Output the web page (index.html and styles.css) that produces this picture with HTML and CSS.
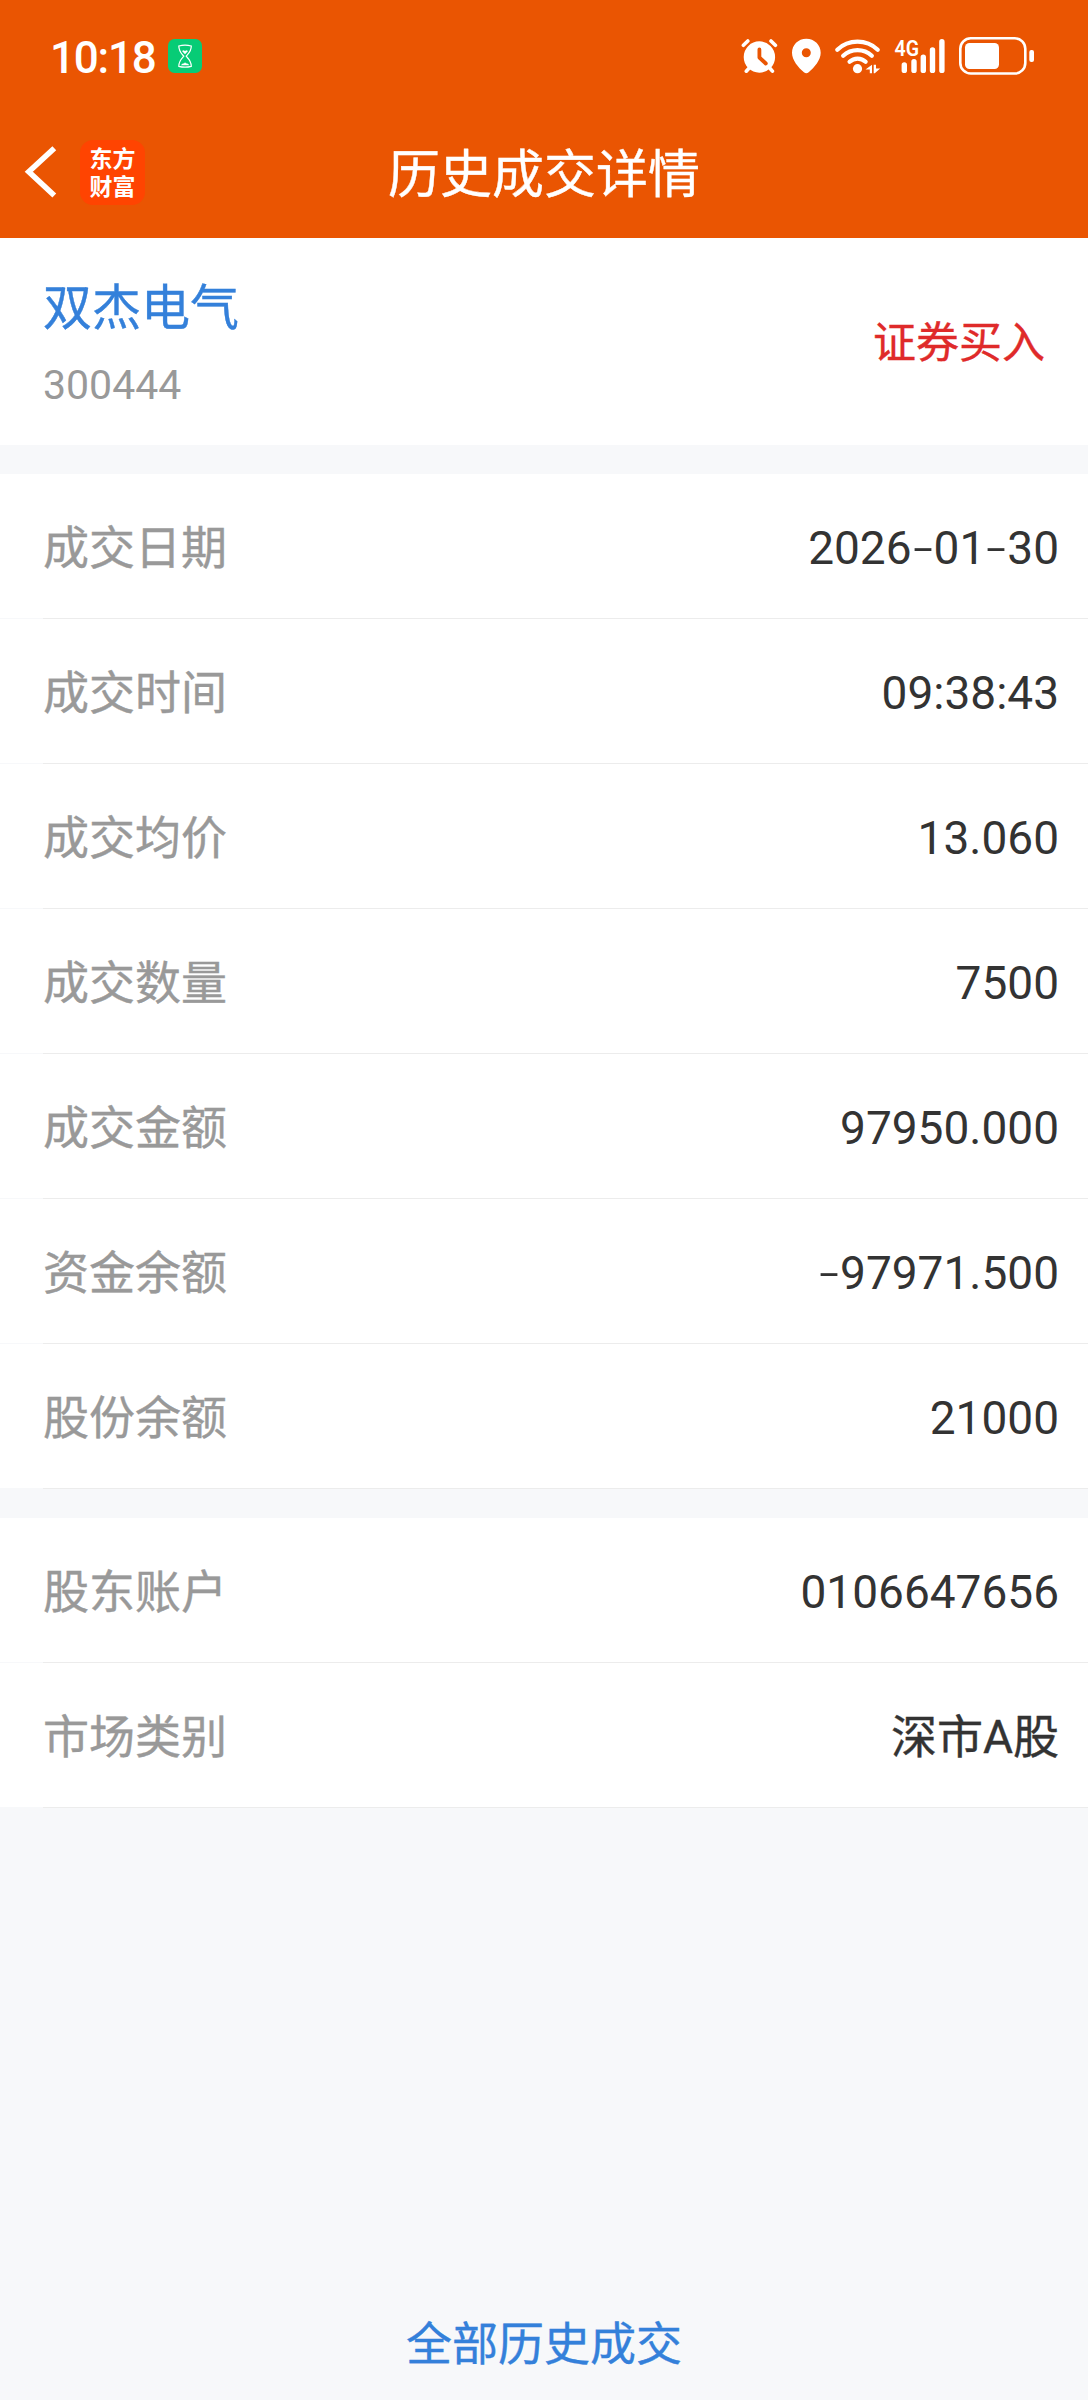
FILE: index.html
```html
<!DOCTYPE html>
<html lang="zh-CN">
<head>
<meta charset="utf-8">
<title>历史成交详情</title>
<link rel="stylesheet" href="styles.css">
</head>
<body>
<header class="header">
  <div class="status">
    <div class="status-left">
      <span class="clock">10:18</span>
      <svg class="timer" width="34" height="34" viewBox="0 0 34 34">
        <rect width="34" height="34" rx="6.5" fill="#07cc76"/>
        <g fill="none" stroke="#fff" stroke-width="1.2">
          <path d="M10.800 7Q17 5.400 23.300 7C23.300 12.500 20.500 14.500 18.200 17.200C20.500 19.800 23.300 22 23.300 27.300Q17 29 10.800 27.300C10.800 22 13.500 19.800 15.800 17.200C13.500 14.500 10.800 12.500 10.800 7Z"/>
        </g>
        <path d="M14 12l1.600-.8 1.400.8 1.500-.8 1.500.8-3 3.200zM12.800 26.200l1.500-1.500 2-.4.700-1 .9 1 2 .4 1.500 1.500z" fill="#fff"/>
      </svg>
    </div>
    <div class="status-right">
      <svg width="38" height="38" viewBox="740 37 38 38">
        <g stroke="#fff" stroke-width="3.600" stroke-linecap="round">
          <path d="M743.400 45.300L747.800 41M775.400 45.300L771 41M746.300 71.200L751 66M772.400 71.200L768 66"/>
        </g>
        <circle cx="759.400" cy="57" r="15.700" fill="#fff"/>
        <path d="M759.400 49.500V57.500L765.800 63.500" fill="none" stroke="#ea5502" stroke-width="3.800" stroke-linecap="round" stroke-linejoin="round"/>
      </svg>
      <svg class="pin" width="30" height="38" viewBox="791 37 30 38">
        <path fill="#fff" fill-rule="evenodd" d="M806.300 38.700C814.500 38.700 820.700 45 820.700 52.700C820.700 60 814.500 67.300 808.700 72.200Q806.300 74.200 803.900 72.200C798.100 67.300 792 60 792 52.700C792 45 798.100 38.700 806.300 38.700ZM806.300 48.200A4.500 4.500 0 1 0 806.300 57.200A4.500 4.500 0 1 0 806.300 48.200Z"/>
      </svg>
      <svg class="wifi" width="47" height="38" viewBox="834 37 47 38">
        <g fill="none" stroke="#fff" stroke-width="4.300" stroke-linecap="round">
          <path d="M837.300 49.700A29.500 29.500 0 0 1 877.700 49.700M843.200 55.700A21 21 0 0 1 871.800 55.700M849.600 61.800A11.500 11.500 0 0 1 865.600 61.800"/>
        </g>
        <circle cx="857.500" cy="68.700" r="4.600" fill="#fff"/>
        <path d="M865.500 69.500L872 64.800V73.300H869.800V69.500ZM873.700 64.800H876V68.500H880.200L874.800 73.300H873.700Z" fill="#fff"/>
      </svg>
      <svg class="signal" width="52" height="46" viewBox="894 33 52 46">
        <text class="network" x="894.500" y="55.600" textLength="24.500" lengthAdjust="spacingAndGlyphs">4G</text>
        <g stroke="#fff" stroke-width="5.400" stroke-linecap="round">
          <path d="M904.300 65V70.400M914 61.700V70.400M923.300 57.200V70.400M932.500 50V70.400M941.900 41.700V70.400"/>
        </g>
      </svg>
      <svg class="battery" width="76" height="38" viewBox="959 37 76 38">
        <rect x="960.300" y="38.300" width="65" height="35.200" rx="10.500" fill="none" stroke="#fff" stroke-width="2.600"/>
        <rect x="965" y="43" width="34" height="26" rx="4.500" fill="#fff"/>
        <rect x="1029.300" y="50" width="4.700" height="12" rx="2" fill="#fff"/>
      </svg>
    </div>
  </div>
  <nav class="nav">
    <div class="nav-left">
      <svg width="34" height="54" viewBox="24 146 34 54">
        <path d="M54.300 149.200L28.800 172.800L54.300 196.500" fill="none" stroke="#fff" stroke-width="5.600"/>
      </svg>
      <div class="logo"><span>东方</span><span>财富</span></div>
    </div>
    <h1 class="title">历史成交详情</h1>
    <div></div>
  </nav>
</header>
<main class="content">
  <section class="stock">
    <div>
      <div class="name">双杰电气</div>
      <div class="code">300444</div>
    </div>
    <div class="side">证券买入</div>
  </section>
  <section class="group">
    <div class="row"><span class="label">成交日期</span><span class="value">2026<i class="dash">-</i>01<i class="dash">-</i>30</span></div>
    <div class="row"><span class="label">成交时间</span><span class="value">09:38:43</span></div>
    <div class="row"><span class="label">成交均价</span><span class="value">13.060</span></div>
    <div class="row"><span class="label">成交数量</span><span class="value">7500</span></div>
    <div class="row"><span class="label">成交金额</span><span class="value">97950.000</span></div>
    <div class="row"><span class="label">资金余额</span><span class="value"><i class="dash">-</i>97971.500</span></div>
    <div class="row"><span class="label">股份余额</span><span class="value">21000</span></div>
  </section>
  <section class="group">
    <div class="row"><span class="label">股东账户</span><span class="value">0106647656</span></div>
    <div class="row"><span class="label">市场类别</span><span class="value cjk">深市A股</span></div>
  </section>
</main>
<footer class="footer"><a class="all-link">全部历史成交</a></footer>
</body>
</html>
```
FILE: styles.css
```css
* { box-sizing: border-box; }

body {
  margin: 0;
  width: 1088px;
  height: 2400px;
  display: flex;
  flex-direction: column;
  background: #f7f8fa;
  color: #333;
  font-family: Roboto, "Noto Sans CJK SC", sans-serif;
}

svg { display: block; flex: none; }

.header {
  height: 238px;
  background: #ea5502;
  color: #fff;
}

.status {
  height: 110px;
  padding: 2px 53px 0 50px;
  display: flex;
  align-items: center;
  justify-content: space-between;
}

.status-left,
.status-right { display: flex; align-items: center; }

.clock {
  width: 118px;
  padding-top: 3px;
  font-size: 44px;
  font-weight: 500;
  line-height: 52px;
  letter-spacing: -1.2px;
}

.pin { margin-left: 13px; }
.wifi { margin-left: 13px; }
.signal { margin-left: 13px; }
.battery { margin-left: 13px; }

.network {
  fill: #fff;
  font-size: 22.5px;
  font-weight: 600;
}

.nav {
  height: 128px;
  padding: 0 24px 4px;
  display: grid;
  grid-template-columns: 1fr auto 1fr;
  align-items: center;
}

.nav-left { display: flex; align-items: center; gap: 22px; }

.logo {
  width: 65px;
  height: 65px;
  padding-bottom: 2px;
  border-radius: 13px;
  background: #ff4401;
  display: flex;
  flex-direction: column;
  align-items: center;
  justify-content: center;
  font: 700 23px/28px "Noto Sans CJK SC", sans-serif;
}

.title {
  margin: 0;
  padding-top: 8px;
  font-size: 52px;
  font-weight: 400;
  line-height: 64px;
}

.title,
.name,
.side,
.label,
.cjk,
.all-link { -webkit-text-stroke: 0.4px currentColor; }

.stock {
  height: 207px;
  padding: 0 43px;
  display: flex;
  align-items: center;
  justify-content: space-between;
  background: #fff;
}

.name {
  padding-top: 10px;
  color: #3480da;
  font-size: 49px;
  line-height: 76px;
}

.code {
  color: #999;
  font-size: 41px;
  line-height: 76px;
}

.side {
  padding-top: 2px;
  color: #df2a2a;
  font-size: 43px;
  line-height: 60px;
}

.group { margin-top: 29px; }

.row {
  height: 145px;
  padding: 2px 29px 0 43px;
  display: flex;
  align-items: center;
  justify-content: space-between;
  background:
    linear-gradient(#ececec, #ececec) 43px 144px / 1045px 1px no-repeat,
    linear-gradient(#fff, #fff) 0 0 / 100% 144px no-repeat;
  font-size: 46px;
  line-height: 60px;
}

.label { color: #999; }

.dash {
  display: inline-block;
  width: 22px;
  font-family: Inter, sans-serif;
  font-style: normal;
  font-weight: 300;
  text-align: center;
  transform: scaleX(1.2);
}

.footer {
  margin-top: auto;
  height: 114px;
  padding-top: 2px;
  display: flex;
  align-items: center;
  justify-content: center;
}

.all-link { color: #3480da; font-size: 46px; line-height: 60px; }
```
